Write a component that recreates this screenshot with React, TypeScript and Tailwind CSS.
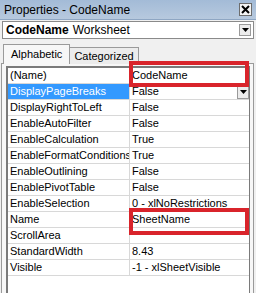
import React from "react";

const rows: [string, string][] = [
  ["(Name)", "CodeName"],
  ["DisplayPageBreaks", "False"],
  ["DisplayRightToLeft", "False"],
  ["EnableAutoFilter", "False"],
  ["EnableCalculation", "True"],
  ["EnableFormatConditionsCalculation", "True"],
  ["EnableOutlining", "False"],
  ["EnablePivotTable", "False"],
  ["EnableSelection", "0 - xlNoRestrictions"],
  ["Name", "SheetName"],
  ["ScrollArea", ""],
  ["StandardWidth", "8.43"],
  ["Visible", "-1 - xlSheetVisible"],
];

export default function App() {
  return (
    <div className="relative w-[256px] h-[293px] overflow-hidden bg-[#f0f0f0] font-['Liberation_Sans',Arial,sans-serif] text-black">
      {/* Title bar */}
      <div className="h-[20px] flex items-center justify-between pl-[4px] pr-[4px] bg-gradient-to-b from-[#a3bbd7] to-[#b7c9de] border-b border-[#8ea6c3]">
        <span className="text-[12px] leading-none">Properties - CodeName</span>
        <div className="w-[13px] h-[13px] bg-[#f4f4f4] border border-[#6d6d6d] flex items-center justify-center">
          <svg width="9" height="9" viewBox="0 0 9 9">
            <path d="M1 1 L8 8 M8 1 L1 8" stroke="#000" strokeWidth="2" />
          </svg>
        </div>
      </div>

      {/* Object dropdown */}
      <div className="mt-[1px] mx-[2px] h-[18px] bg-white border border-[#8a8a8a] flex items-center pl-[3px] pr-[2px]">
        <span className="text-[12px] leading-none font-bold">CodeName</span>
        <span className="text-[12px] leading-none ml-[4px]">Worksheet</span>
        <div className="ml-auto w-[12px] h-[12px] bg-[#ececec] border border-[#9a9a9a] flex items-center justify-center">
          <svg width="7" height="4" viewBox="0 0 7 4">
            <path d="M0 0 H7 L3.5 4 Z" fill="#000" />
          </svg>
        </div>
      </div>

      {/* Tabs */}
      <div className="mt-[5px] flex items-end pl-[3px] h-[20px]">
        <div className="h-[20px] px-[7px] flex items-center bg-[#f7f7f7] border-t border-l border-r border-[#9a9a9a] text-[11px] leading-none relative z-10">
          Alphabetic
        </div>
        <div className="h-[17px] px-[4px] flex items-center bg-[#ececec] border-t border-r border-[#9a9a9a] text-[11px] leading-none">
          Categorized
        </div>
      </div>

      {/* Tab body */}
      <div className="ml-[1px] w-[253px] h-[300px] border-l border-r border-t border-[#9a9a9a] bg-[#f7f7f7] -mt-[1px] pl-[4px] pr-[3px] pt-[2px]">
        <div className="h-full border-l-2 border-r border-t-2 border-[#7a7a7a] bg-white">
          {rows.map(([name, value], i) => (
            <div key={name} className="flex h-[16px] border-b border-[#d8d8d8] text-[11px] leading-none">
              <div
                className={`w-[122px] shrink-0 pl-[2px] flex items-center overflow-hidden whitespace-nowrap border-r border-[#d8d8d8] ${
                  i === 1 ? "bg-[#3399ff] text-white" : ""
                }`}
              >
                {name}
              </div>
              <div className="flex-1 flex items-center pl-[2px] whitespace-nowrap">
                {value}
                {i === 1 && (
                  <div className="ml-auto w-[12px] h-[14px] bg-[#ececec] border border-[#9a9a9a] flex items-center justify-center">
                    <svg width="7" height="4" viewBox="0 0 7 4">
                      <path d="M0 0 H7 L3.5 4 Z" fill="#000" />
                    </svg>
                  </div>
                )}
              </div>
            </div>
          ))}
        </div>
      </div>

      {/* Red annotation boxes */}
      <div className="absolute left-[129px] top-[61px] w-[120px] h-[26px] border-[4px] border-[#d9242b]" />
      <div className="absolute left-[129px] top-[208px] w-[120px] h-[27px] border-[4px] border-[#d9242b]" />
    </div>
  );
}
